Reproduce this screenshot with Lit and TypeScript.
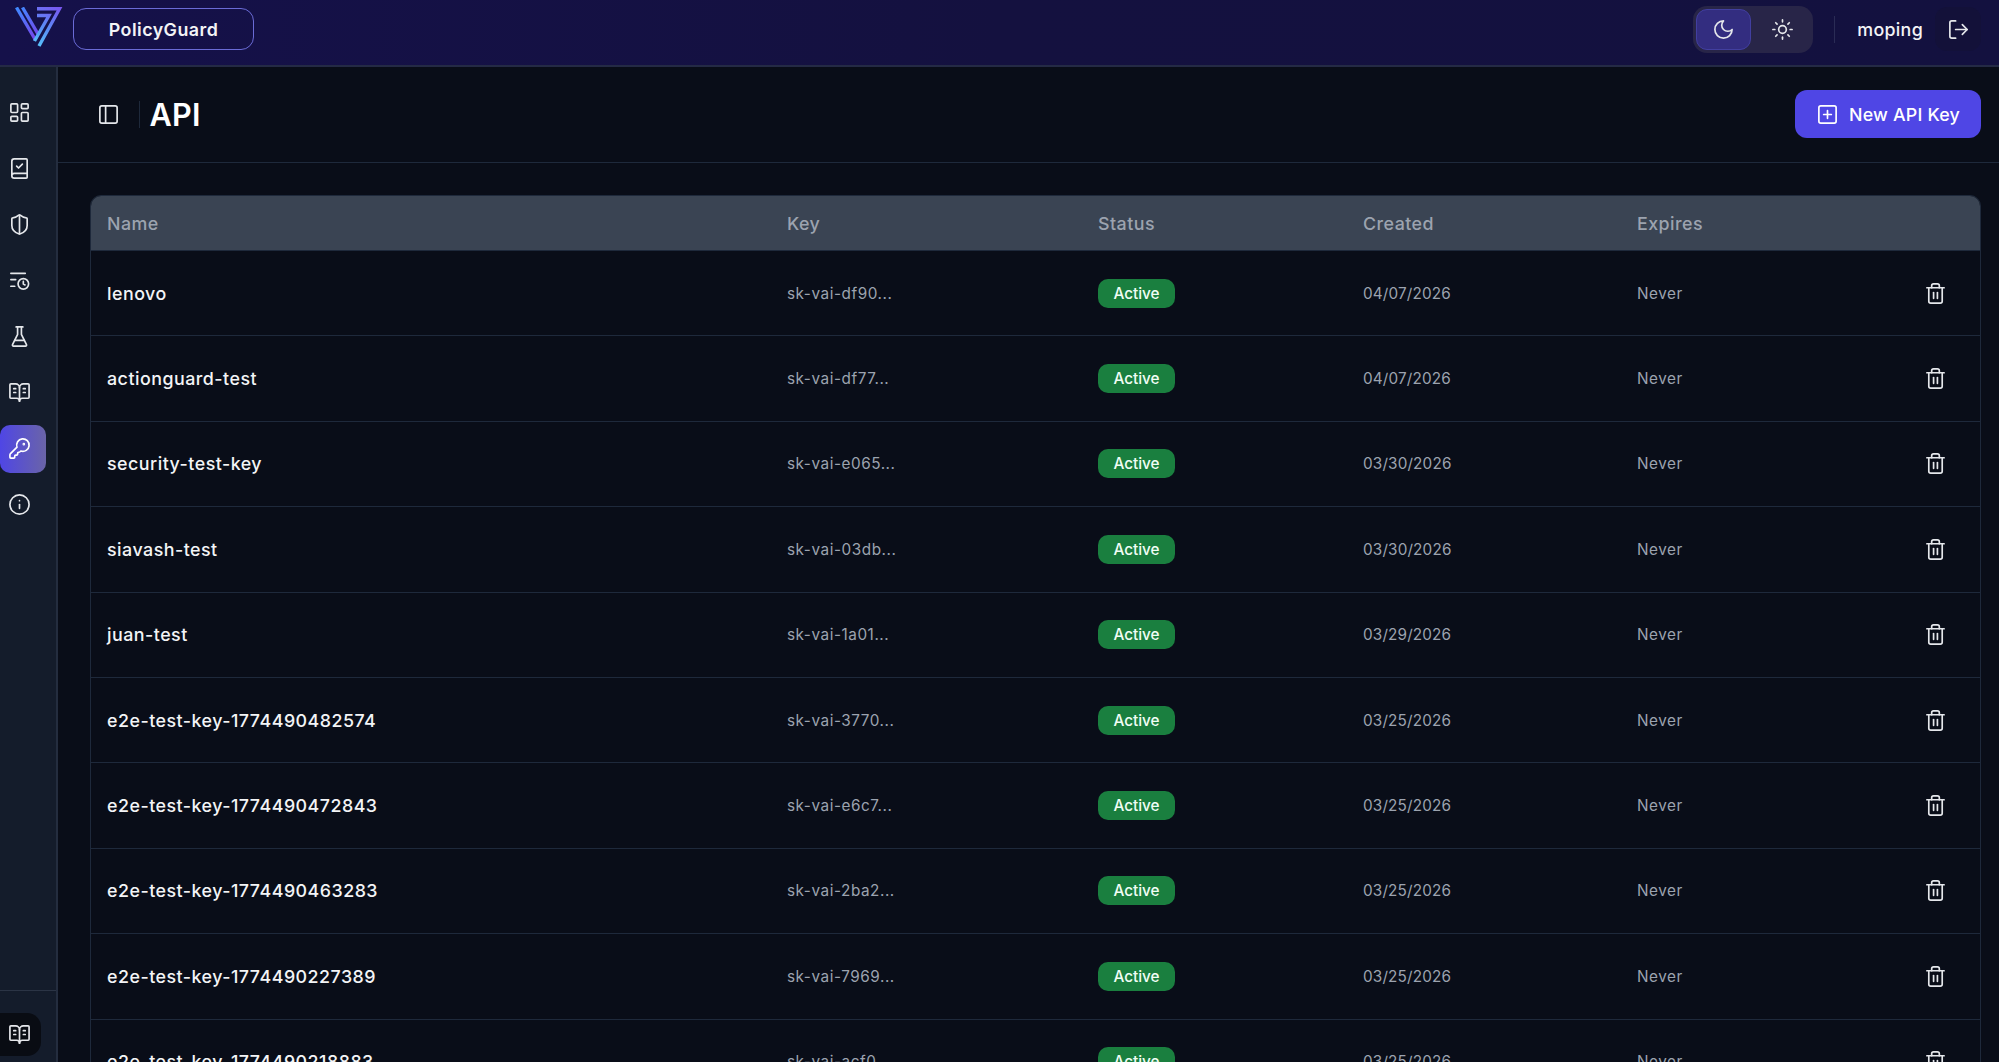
import { LitElement, html, css, svg } from "lit";
import { customElement } from "lit/decorators.js";

const ic = (body: unknown, cls = "") => html`<svg class="ic ${cls}" viewBox="0 0 24 24" fill="none" stroke="currentColor" stroke-linecap="round" stroke-linejoin="round">${body}</svg>`;

const I = {
  dash: svg`<rect x="3" y="3" width="7" height="9" rx="1"/><rect x="14" y="3" width="7" height="5" rx="1"/><rect x="14" y="12" width="7" height="9" rx="1"/><rect x="3" y="16" width="7" height="5" rx="1"/>`,
  bookCheck: svg`<path d="M4 19.5v-15A2.5 2.5 0 0 1 6.5 2H19a1 1 0 0 1 1 1v18a1 1 0 0 1-1 1H6.5a1 1 0 0 1 0-5H20"/><path d="m9 9.5 2 2 4-4"/>`,
  shield: svg`<path d="M20 13c0 5-3.5 7.5-7.66 8.95a1 1 0 0 1-.67-.01C7.5 20.5 4 18 4 13V6a1 1 0 0 1 1-1c2 0 4.5-1.2 6.24-2.72a1.17 1.17 0 0 1 1.52 0C14.51 3.81 17 5 19 5a1 1 0 0 1 1 1z"/><path d="M12 3v18"/>`,
  history: svg`<path d="M16 21a5.5 5.5 0 1 0 0-11 5.5 5.5 0 0 0 0 11z"/><path d="M16 13v2.6l1.8 1"/><path d="M3 4.5h15"/><path d="M3 11h5"/><path d="M3 18h4"/>`,
  flask: svg`<path d="M10 2v7.53a2 2 0 0 1-.21.9L4.72 20.55a1 1 0 0 0 .9 1.45h12.76a1 1 0 0 0 .9-1.45l-5.07-10.12a2 2 0 0 1-.21-.9V2"/><path d="M8.5 2h7"/><path d="M7 16h10"/>`,
  book: svg`<path d="M12 7v14"/><path d="M16 12h2"/><path d="M16 8h2"/><path d="M3 18a1 1 0 0 1-1-1V4a1 1 0 0 1 1-1h5a4 4 0 0 1 4 4 4 4 0 0 1 4-4h5a1 1 0 0 1 1 1v13a1 1 0 0 1-1 1h-6a3 3 0 0 0-3 3 3 3 0 0 0-3-3z"/><path d="M6 12h2"/><path d="M6 8h2"/>`,
  key: svg`<path d="M2.586 17.414A2 2 0 0 0 2 18.828V21a1 1 0 0 0 1 1h3a1 1 0 0 0 1-1v-1a1 1 0 0 1 1-1h1a1 1 0 0 0 1-1v-1a1 1 0 0 1 1-1h.172a2 2 0 0 0 1.414-.586l.814-.814a6.5 6.5 0 1 0-4-4z"/><circle cx="16.5" cy="7.5" r=".5" fill="currentColor"/>`,
  info: svg`<circle cx="12" cy="12" r="10"/><path d="M12 16v-4"/><path d="M12 8h.01"/>`,
  panel: svg`<rect x="3" y="3" width="18" height="18" rx="2"/><path d="M9 3v18"/>`,
  plus: svg`<rect x="3" y="3" width="18" height="18" rx="2"/><path d="M8 12h8"/><path d="M12 8v8"/>`,
  moon: svg`<path d="M12 3a6 6 0 0 0 9 9 9 9 0 1 1-9-9Z"/>`,
  sun: svg`<circle cx="12" cy="12" r="4"/><path d="M12 2v2"/><path d="M12 20v2"/><path d="m4.93 4.93 1.41 1.41"/><path d="m17.66 17.66 1.41 1.41"/><path d="M2 12h2"/><path d="M20 12h2"/><path d="m6.34 17.66-1.41 1.41"/><path d="m19.07 4.93-1.41 1.41"/>`,
  logout: svg`<path d="M9 21H5a2 2 0 0 1-2-2V5a2 2 0 0 1 2-2h4"/><path d="m16 17 5-5-5-5"/><path d="M21 12H9"/>`,
  trash: svg`<path d="M3 6h18"/><path d="M19 6v14a2 2 0 0 1-2 2H7a2 2 0 0 1-2-2V6"/><path d="M8 6V4a2 2 0 0 1 2-2h4a2 2 0 0 1 2 2v2"/><path d="M10 11v6"/><path d="M14 11v6"/>`,
};

const NAV = [I.dash, I.bookCheck, I.shield, I.history, I.flask, I.book, I.key, I.info];

const ROWS: [string, string, string][] = [
  ["lenovo", "sk-vai-df90...", "04/07/2026"],
  ["actionguard-test", "sk-vai-df77...", "04/07/2026"],
  ["security-test-key", "sk-vai-e065...", "03/30/2026"],
  ["siavash-test", "sk-vai-03db...", "03/30/2026"],
  ["juan-test", "sk-vai-1a01...", "03/29/2026"],
  ["e2e-test-key-1774490482574", "sk-vai-3770...", "03/25/2026"],
  ["e2e-test-key-1774490472843", "sk-vai-e6c7...", "03/25/2026"],
  ["e2e-test-key-1774490463283", "sk-vai-2ba2...", "03/25/2026"],
  ["e2e-test-key-1774490227389", "sk-vai-7969...", "03/25/2026"],
  ["e2e-test-key-1774490218883", "sk-vai-acf0...", "03/25/2026"],
];

@customElement("app-root")
export class AppRoot extends LitElement {
  static styles = css`
    :host { display: block; height: 1062px; overflow: hidden; background: #090d18; color: #f3f4f6;
      font-family: Inter, "Liberation Sans", sans-serif; }
    .ic { width: 23px; height: 23px; stroke-width: 1.75; flex: none; display: block; }
    .top { height: 66.5px; box-sizing: border-box; border-bottom: 2px solid #242a45; background: linear-gradient(90deg, #15114a, #14113f 50%, #13113f);
      display: flex; align-items: center; padding: 0 18px 6px 15px; }
    .logo { width: 48px; height: 42px; flex: none; margin-top: -2px; }
    .brand { margin-left: 10px; width: 181px; height: 42px; box-sizing: border-box; border: 1.75px solid #6a6bd6; border-radius: 13px;
      display: flex; align-items: center; justify-content: center; font-size: 17.85px; font-weight: 600; letter-spacing: .45px; color: #f3f4f6; }
    .spacer { flex: 1; }
    .toggle { display: flex; width: 120px; height: 47px; box-sizing: border-box; padding: 3px; background: #282548; border-radius: 14px; }
    .tbtn { width: 56px; height: 41px; box-sizing: border-box; display: flex; align-items: center; justify-content: center; border-radius: 11px; color: #e5e7eb; }
    .tbtn.on { width: 55px; background: #332d80; border: 1.5px solid #423fa0; }
    .tbtn.off { margin-left: 4px; }
    .vline { width: 1px; height: 27px; background: #2a2c55; margin: 0 22px 0 21px; }
    .user { font-size: 17.85px; font-weight: 500; letter-spacing: .3px; color: #f3f4f6; }
    .logout { margin-left: 12px; width: 46px; height: 44px; display: flex; align-items: center; justify-content: center; border-radius: 12px; background: #131139; color: #e5e7eb; }
    .body { display: flex; height: 995.5px; }
    .side { width: 57.5px; flex: none; box-sizing: border-box; border-right: 2px solid #242d3f; background: #141c2b; display: flex; flex-direction: column; }
    .nav { flex: 1; display: flex; flex-direction: column; gap: 8.1px; padding-top: 21.7px; }
    .nbtn { width: 46px; height: 48px; box-sizing: border-box; padding-left: 7.5px; display: flex; align-items: center; border-radius: 10px; color: #e5e7eb; }
    .nbtn.on { background: linear-gradient(90deg, #4f46e5, #6a64a8); color: #fff; }
    .sfoot { border-top: 1px solid #2b3445; height: 72.5px; box-sizing: border-box; padding-top: 22px; }
    .sbtn { width: 41px; height: 43px; box-sizing: border-box; padding-left: 7.5px; display: flex; align-items: center; background: #090c13; border-radius: 0 14px 14px 0; color: #e5e7eb; }
    .main { flex: 1; min-width: 0; display: flex; flex-direction: column; }
    .phead { height: 96.5px; box-sizing: border-box; flex: none; border-bottom: 1.5px solid #1e293b; display: flex; align-items: center; padding: 0 18px 0 39px; }
    .pico { color: #e5e7eb; }
    .pdiv { width: 1px; height: 27px; background: #1e293b; margin: 0 10px 0 19px; }
    h1 { margin: 0; padding-top: 2px; font-size: 30.6px; font-weight: 600; letter-spacing: .2px; color: #fff; line-height: 1; }
    .new { width: 186px; height: 48px; display: flex; align-items: center; justify-content: center; gap: 10px; background: #4f46e5; border-radius: 12px; color: #fff; font-size: 17.85px; font-weight: 500; letter-spacing: .2px; }
    .wrap { padding: 32px 18px 0 32.5px; }
    .table { border: 1px solid #1e293b; border-radius: 11px 11px 0 0; overflow: hidden; }
    .row { display: grid; grid-template-columns: 680px 311px 265px 274px 1fr 92px; align-items: center; height: 85.4px; box-sizing: border-box; border-bottom: 1.5px solid #1e293b; }
    .row.head { height: 55px; background: #3a4453; color: #9ca3af; font-size: 17.85px; font-weight: 500; letter-spacing: .45px; }
    .row > div { padding-left: 16px; }
    .name { font-size: 17.85px; font-weight: 500; letter-spacing: .48px; color: #f3f4f6; }
    .small { font-size: 15.3px; letter-spacing: .55px; color: #9ca3af; }
    .date { font-size: 15.3px; letter-spacing: .15px; color: #9ca3af; }
    .badge { display: inline-flex; align-items: center; justify-content: center; width: 77px; height: 29px; border-radius: 10px; background: #1a7f3f; color: #f0fdf4; font-size: 15.3px; font-weight: 500; }
    .row > .act { padding-left: 35.5px; color: #e5e7eb; display: flex; }
  `;

  private logo() {
    return html`<svg class="logo" viewBox="0 0 48 42" fill="none" stroke-width="3.4" stroke-linecap="butt" stroke-linejoin="miter">
      <defs>
        <linearGradient id="l1" gradientUnits="userSpaceOnUse" x1="2" y1="0" x2="24" y2="34"><stop offset="0" stop-color="#3f8bff"/><stop offset="1" stop-color="#7c3dea"/></linearGradient>
        <linearGradient id="l2" gradientUnits="userSpaceOnUse" x1="46" y1="0" x2="24" y2="42"><stop offset="0" stop-color="#7a55f0"/><stop offset="0.55" stop-color="#5a8cf5"/><stop offset="1" stop-color="#56c8fb"/></linearGradient>
      </defs>
      <path d="M1.5 .5 20.5 33" stroke="url(#l1)"/>
      <path d="M7.5 .5 23 27" stroke="url(#l1)"/>
      <path d="M22 1.8H44.5L24 39" stroke="url(#l2)"/>
      <path d="M22 8.5H34L19.5 34" stroke="url(#l2)"/>
    </svg>`;
  }

  render() {
    return html`
      <div class="top">
        ${this.logo()}
        <div class="brand">PolicyGuard</div>
        <div class="spacer"></div>
        <div class="toggle">
          <div class="tbtn on">${ic(I.moon)}</div>
          <div class="tbtn off">${ic(I.sun)}</div>
        </div>
        <div class="vline"></div>
        <div class="user">moping</div>
        <div class="logout">${ic(I.logout)}</div>
      </div>
      <div class="body">
        <aside class="side">
          <nav class="nav">
            ${NAV.map((n, i) => html`<div class="nbtn ${i === 6 ? "on" : ""}">${ic(n)}</div>`)}
          </nav>
          <div class="sfoot"><div class="sbtn">${ic(I.book)}</div></div>
        </aside>
        <main class="main">
          <header class="phead">
            <span class="pico">${ic(I.panel)}</span>
            <span class="pdiv"></span>
            <h1>API</h1>
            <div class="spacer"></div>
            <div class="new">${ic(I.plus)}<span>New API Key</span></div>
          </header>
          <div class="wrap">
            <div class="table">
              <div class="row head">
                <div>Name</div><div>Key</div><div>Status</div><div>Created</div><div>Expires</div><div></div>
              </div>
              ${ROWS.map(
                ([n, k, d]) => html`<div class="row">
                  <div class="name">${n}</div>
                  <div class="small">${k}</div>
                  <div><span class="badge">Active</span></div>
                  <div class="date">${d}</div>
                  <div class="small">Never</div>
                  <div class="act">${ic(I.trash)}</div>
                </div>`
              )}
            </div>
          </div>
        </main>
      </div>
    `;
  }
}
